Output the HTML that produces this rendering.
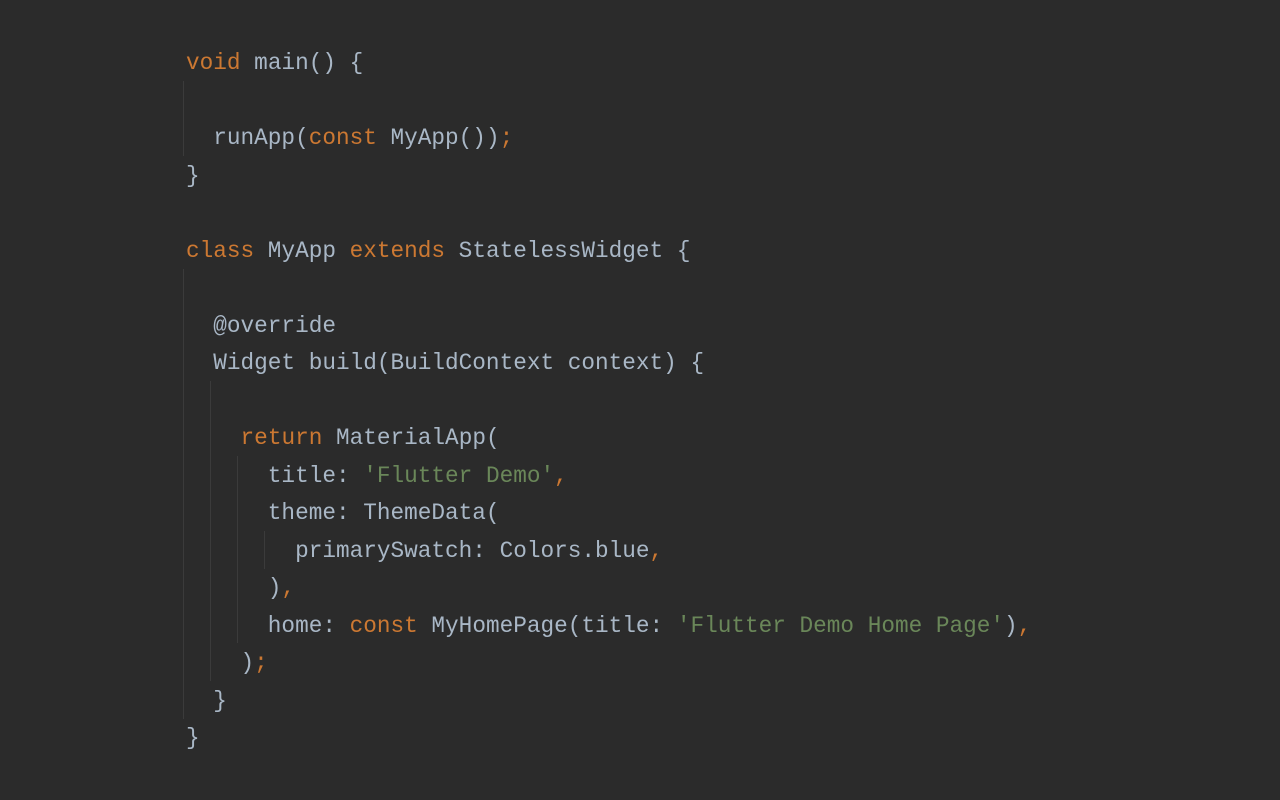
<!DOCTYPE html>
<html><head><meta charset="utf-8"><style>
html,body{margin:0;padding:0;background:#2b2b2b;width:1280px;height:800px;overflow:hidden}
pre{position:absolute;left:186px;top:45px;margin:0;font-family:"Liberation Mono",monospace;font-size:22.72px;line-height:37.5px;color:#a9b7c6}
.k{color:#cc7832}.s{color:#6a8759}
.g{position:absolute;width:1px;background:#3b3b3b}
</style></head><body>
<div class="g" style="left:183px;top:81px;height:75px"></div>
<div class="g" style="left:183px;top:269px;height:450px"></div>
<div class="g" style="left:210px;top:381px;height:300px"></div>
<div class="g" style="left:237px;top:456px;height:187px"></div>
<div class="g" style="left:264px;top:531px;height:38px"></div>
<pre><span class="k">void</span> main() {

  runApp(<span class="k">const</span> MyApp())<span class="k">;</span>
}

<span class="k">class</span> MyApp <span class="k">extends</span> StatelessWidget {

  @override
  Widget build(BuildContext context) {

    <span class="k">return</span> MaterialApp(
      title: <span class="s">'Flutter Demo'</span><span class="k">,</span>
      theme: ThemeData(
        primarySwatch: Colors.blue<span class="k">,</span>
      )<span class="k">,</span>
      home: <span class="k">const</span> MyHomePage(title: <span class="s">'Flutter Demo Home Page'</span>)<span class="k">,</span>
    )<span class="k">;</span>
  }
}</pre>
</body></html>
